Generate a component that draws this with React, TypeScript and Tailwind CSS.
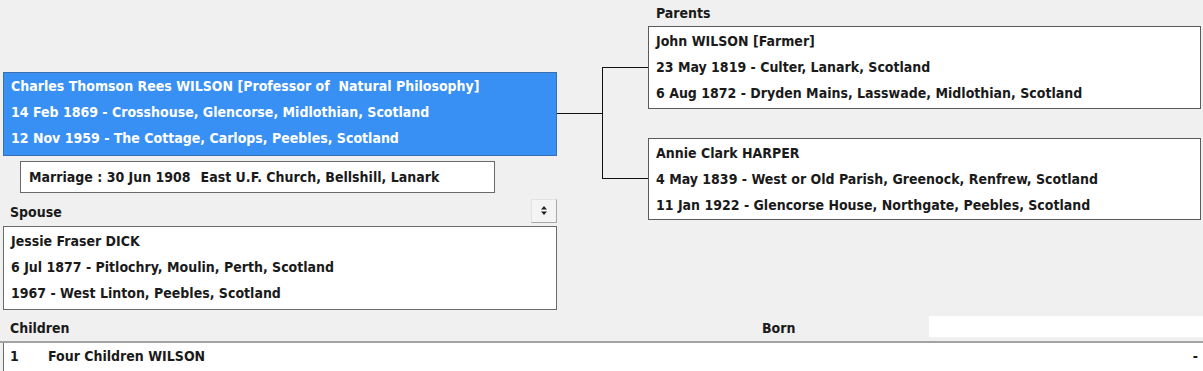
import React from "react";

const font = { fontFamily: '"DejaVu Sans Condensed", "Liberation Sans", sans-serif' };

function Lines({ lines, className }: { lines: string[]; className?: string }) {
  return (
    <div className={"pl-[7px] pt-[1px] leading-[26px] text-[14px] font-bold " + (className ?? "")}>
      {lines.map((l, i) => (
        <div key={i} className="whitespace-pre">{l}</div>
      ))}
    </div>
  );
}

export default function App() {
  return (
    <div className="w-[1203px] h-[371px] bg-[#f0f0f0] overflow-hidden text-[#1a1a1a]" style={font}>
      <div className="flex h-[312px]">
        {/* left column */}
        <div className="w-[557px] pl-[3px] pt-[72px] flex flex-col">
          <div className="h-[84px] bg-[#3990f4] border border-[#3a6fb0] text-white">
            <div className="pl-[7px] leading-[26px] text-[14px] font-bold">
              <div className="whitespace-pre">Charles Thomson Rees WILSON [Professor of  Natural Philosophy]</div>
              <div className="whitespace-pre">14 Feb 1869 - Crosshouse, Glencorse, Midlothian, Scotland</div>
              <div className="whitespace-pre">12 Nov 1959 - The Cottage, Carlops, Peebles, Scotland</div>
            </div>
          </div>
          <div className="ml-[17px] mt-[5px] w-[475px] h-[32px] bg-white border border-[#6a6a6a] flex items-center pl-[8px] text-[14px] font-bold whitespace-pre">
            <span>Marriage : 30 Jun 1908</span>
            <span className="ml-[10px]">East U.F. Church, Bellshill, Lanark</span>
          </div>
          <div className="mt-[5px] h-[25px] flex items-center justify-between">
            <span className="pl-[7px] pt-[4px] text-[14px] font-bold">Spouse</span>
            <div className="w-[26px] h-[24px] bg-[#f4f4f4] border border-[#e2e2e2] border-r-[#a8a8a8] border-b-[#a8a8a8] flex items-center justify-center">
              <svg width="6" height="9" viewBox="0 0 6 9">
                <path d="M3 0 L6 3.5 L0 3.5 Z" fill="#222" />
                <path d="M3 9 L6 5.5 L0 5.5 Z" fill="#222" />
              </svg>
            </div>
          </div>
          <div className="mt-[3px] h-[84px] bg-white border border-[#6a6a6a]">
            <Lines
              lines={[
                "Jessie Fraser DICK",
                "6 Jul 1877 - Pitlochry, Moulin, Perth, Scotland",
                "1967 - West Linton, Peebles, Scotland",
              ]}
            />
          </div>
        </div>
        {/* connector */}
        <svg width="91" height="312" className="shrink-0">
          <line x1="0" y1="113.5" x2="45" y2="113.5" stroke="#111" strokeWidth="1" />
          <line x1="45.5" y1="67" x2="45.5" y2="179" stroke="#111" strokeWidth="1" />
          <line x1="45" y1="67.5" x2="91" y2="67.5" stroke="#111" strokeWidth="1" />
          <line x1="45" y1="178.5" x2="91" y2="178.5" stroke="#111" strokeWidth="1" />
        </svg>
        {/* right column */}
        <div className="w-[553px] flex flex-col">
          <div className="h-[26px] flex items-center pl-[8px] text-[14px] font-bold">Parents</div>
          <div className="h-[83px] bg-white border border-[#5a5a5a]">
            <Lines
              lines={[
                "John WILSON [Farmer]",
                "23 May 1819 - Culter, Lanark, Scotland",
                "6 Aug 1872 - Dryden Mains, Lasswade, Midlothian, Scotland",
              ]}
            />
          </div>
          <div className="mt-[29px] h-[82px] bg-white border border-[#5a5a5a]">
            <Lines
              lines={[
                "Annie Clark HARPER",
                "4 May 1839 - West or Old Parish, Greenock, Renfrew, Scotland",
                "11 Jan 1922 - Glencorse House, Northgate, Peebles, Scotland",
              ]}
            />
          </div>
        </div>
      </div>
      {/* children header */}
      <div className="h-[31px] flex items-center border-b-2 border-[#a3a3a3] text-[14px] font-bold">
        <span className="pl-[10px] pt-[4px] w-[762px]">Children</span>
        <span className="w-[167px] pt-[4px]">Born</span>
        <div className="h-[21px] flex-1 bg-white self-start mt-[4px]" />
      </div>
      <div className="ml-[3px] h-[40px] bg-white border-l border-[#6a6a6a] flex items-start pt-[3px] text-[14px] font-bold">
        <span className="pl-[6px] w-[44px]">1</span>
        <span className="flex-1">Four Children WILSON</span>
        <span className="pr-[5px]">-</span>
      </div>
    </div>
  );
}
